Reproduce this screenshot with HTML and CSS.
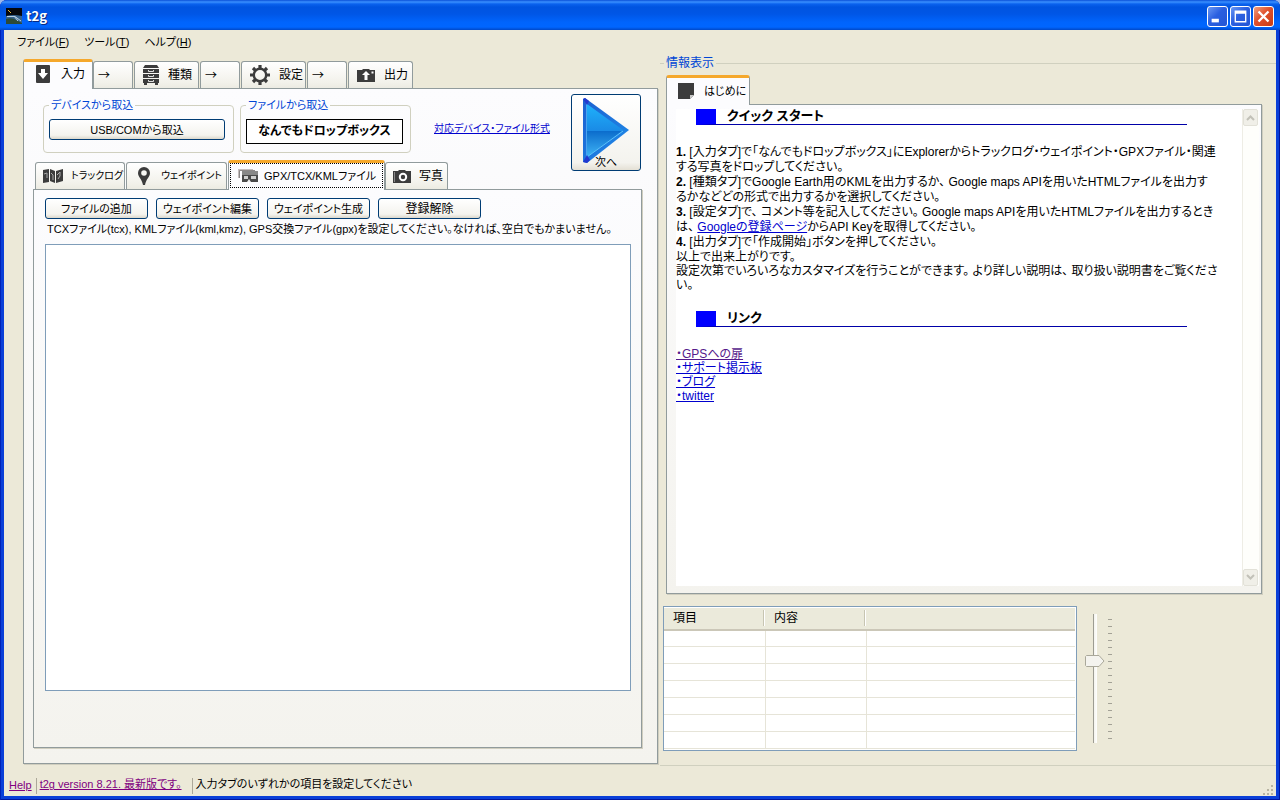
FILE: index.html
```html
<!DOCTYPE html>
<html lang="ja">
<head>
<meta charset="utf-8">
<title>t2g</title>
<link rel="stylesheet" href="styles.css">
</head>
<body>
<div class="window">
  <header class="titlebar">
    <svg class="app-icon" viewBox="0 0 16 16" width="16" height="16" aria-hidden="true">
      <rect width="16" height="16" fill="#05070d"/>
      <path d="M0 8 Q7 6 16 8 V16 H0Z" fill="#35628c"/>
      <path d="M0 11 Q6 9 10 12 L16 15 V16 H0Z" fill="#2c4a38"/>
      <path d="M1 8.500H9L15 13M8 8L12 13" stroke="#b9cfe2" fill="none"/>
      <path d="M2 2h1v1H2zM4 4h1v1H4zM3 3h1v1H3z" fill="#e8b838"/>
    </svg>
    <h1 class="title">t2g</h1>
    <div class="caption-buttons">
      <button class="cap" aria-label="最小化"><svg viewBox="0 0 21 21" width="19" height="19"><path d="M4 13h8v4H4z" fill="#fff"/></svg></button>
      <button class="cap" aria-label="最大化"><svg viewBox="0 0 21 21" width="19" height="19"><path d="M4 4h13v13H4z M5.500 7.500h10v8h-10z" fill="#fff" fill-rule="evenodd"/></svg></button>
      <button class="cap cap-close" aria-label="閉じる"><svg viewBox="0 0 21 21" width="19" height="19"><path d="M5 5L16 16M16 5L5 16" stroke="#fff" stroke-width="2.600"/></svg></button>
    </div>
  </header>

  <div class="client">
    <nav class="menu">
      <button>ファイル(<u>F</u>)</button>
      <button>ツール(<u>T</u>)</button>
      <button>ヘルプ(<u>H</u>)</button>
    </nav>

    <main class="main">
      <section class="left">
        <div class="tabs" role="tablist">
          <button class="tab tab-sel tab-main-sel" role="tab" aria-selected="true">
            <svg viewBox="0 0 14 18" width="14" height="18"><rect width="14" height="18" rx="1" fill="#3c3c3c"/><path d="M5 4h4v4h3l-5 6-5-6h3z" fill="#fff"/></svg>入力</button>
          <button class="tab tab-arrow" role="tab">→</button>
          <button class="tab tab-step" role="tab">
            <svg viewBox="0 0 16 20" width="16" height="20"><path d="M2 0h12l2 3H0zM0 4h16v4H0zM0 9h16v4H0zM0 14h16v4H0zM1 18h3v2H1zM12 18h3v2h-3z" fill="#3c3c3c"/><path d="M5.500 5v1.500h5V5M5.500 10v1.500h5V10M5.500 15v1.500h5V15" stroke="#ddd" fill="none"/></svg>種類</button>
          <button class="tab tab-arrow" role="tab">→</button>
          <button class="tab tab-step" role="tab">
            <svg viewBox="0 0 20 20" width="20" height="20"><circle cx="10" cy="10" r="6.200" fill="none" stroke="#3c3c3c" stroke-width="2.400"/><path d="M10 0v4M10 16v4M0 10h4M16 10h4M3 3l2.800 2.800M14.200 14.200L17 17M17 3l-2.800 2.800M5.800 14.200L3 17" stroke="#3c3c3c" stroke-width="3.200"/></svg>設定</button>
          <button class="tab tab-arrow" role="tab">→</button>
          <button class="tab tab-step" role="tab">
            <svg viewBox="0 0 18 13" width="18" height="13"><path d="M0 1h5l1-1h6l1 1h5v12H0z" fill="#3c3c3c"/><path d="M9 2l4 4h-2.500v5h-3V6H5z" fill="#fff"/><path d="M14.500 2.500h2v2h-2z" fill="#fff"/></svg>出力</button>
        </div>

        <div class="panel outer">
          <div class="source-row">
            <fieldset class="group group-device">
              <legend>デバイスから取込</legend>
              <button class="btn btn-wide">USB/COMから取込</button>
            </fieldset>
            <fieldset class="group group-file">
              <legend>ファイルから取込</legend>
              <div class="dropbox">なんでもドロップボックス</div>
            </fieldset>
            <a class="formats" href="#formats">対応デバイス・ファイル形式</a>
            <button class="btn btn-next">
              <svg viewBox="0 0 46 66" width="46" height="66" aria-hidden="true">
                <defs>
                  <linearGradient id="edge" x1="0" y1="0" x2="1" y2="1"><stop offset="0" stop-color="#1c5fd0"/><stop offset="1" stop-color="#1f8eea"/></linearGradient>
                  <linearGradient id="face" x1="0" y1="0" x2="0" y2="1"><stop offset="0" stop-color="#1fb2fb"/><stop offset=".5" stop-color="#1a8be6"/><stop offset=".51" stop-color="#0b6ccc"/><stop offset="1" stop-color="#3fb4f5"/></linearGradient>
                </defs>
                <path d="M0 1L2 0 46 32 4 65 0 64z" fill="url(#edge)"/>
                <path d="M4 6L40 32 4 59z" fill="url(#face)"/>
                <path d="M4 59L40 33" stroke="#5cc4f8" fill="none"/>
                <path d="M3.500 5V60" stroke="#4aa4ee" fill="none"/>
                <path d="M0 1L2 0 6 3 4 7zM0 64l4-7 3 5-3 3z" fill="#2338cf"/>
              </svg>
              <span>次へ</span>
            </button>
          </div>

          <div class="tabs subtabs" role="tablist">
            <button class="tab tab-track" role="tab">
              <svg viewBox="0 0 20 16" width="20" height="16"><path d="M0 2l6-1v13l-6 1zM7 1l5 2v12l-5-2zM13 3l7-2v12l-7 2z" fill="#3c3c3c"/><path d="M1 6l3-1v5M8 5l2 2v5M14 7l3-3v4l-2 3" stroke="#a8a8a8" fill="none"/></svg>トラックログ</button>
            <button class="tab tab-way" role="tab">
              <svg viewBox="0 0 12 18" width="12" height="18"><path d="M6 0a6 6 0 0 1 6 6c0 4-4 6-5 12H5C4 12 0 10 0 6a6 6 0 0 1 6-6z" fill="#3c3c3c"/><circle cx="6" cy="6" r="2.800" fill="#f8f8f4"/></svg>ウェイポイント</button>
            <button class="tab tab-sel tab-gpx" role="tab" aria-selected="true"><span class="focus">
              <svg viewBox="0 0 20 14" width="20" height="14"><path d="M0 0h15v2H2v7H0z" fill="#c4bcbc"/><path d="M1.500 9V1.500H17" stroke="#8c8888" fill="none"/><path d="M4 3h16v10H4z" fill="#4a4a4a"/><path d="M4 2h16v4H4z" fill="#888"/><path d="M6 7h4v3H6zM13 7h5v3h-5z" fill="#d0d0d0"/><path d="M9 13l2-3 2 3z" fill="#eee"/></svg>GPX/TCX/KMLファイル</span></button>
            <button class="tab tab-photo" role="tab">
              <svg viewBox="0 0 18 13" width="18" height="13"><path d="M0 1h5l1-1h6l1 1h5v12H0z" fill="#3c3c3c"/><circle cx="10" cy="7" r="3.200" fill="none" stroke="#fff" stroke-width="2"/><path d="M1.500 2v10" stroke="#888"/></svg>写真</button>
          </div>

          <div class="panel inner">
            <div class="btn-row">
              <button class="btn">ファイルの追加</button>
              <button class="btn">ウェイポイント編集</button>
              <button class="btn">ウェイポイント生成</button>
              <button class="btn kanji">登録解除</button>
            </div>
            <label class="hint" for="files">TCXファイル(tcx), KMLファイル(kml,kmz), GPS交換ファイル(gpx)を設定してください。なければ、空白でもかまいません。</label>
            <textarea class="files" id="files"></textarea>
          </div>
        </div>
      </section>

      <fieldset class="right">
        <legend class="kanji">情報表示</legend>
        <div class="tabs" role="tablist">
          <button class="tab tab-sel tab-intro" role="tab" aria-selected="true">
            <svg viewBox="0 0 16 16" width="16" height="16"><path d="M0 0h16v12l-4 4H0z" fill="#3c3c3c"/><path d="M12 16v-4h4z" fill="#c8c8c8"/></svg>はじめに</button>
        </div>
        <div class="panel info">
          <article class="doc">
            <h2>クイック スタート</h2>
            <ol class="steps">
              <li><b>1.</b> [入力タブ]で「なんでもドロップボックス」にExplorerからトラックログ・ウェイポイント・GPXファイル・関連<br>する写真をドロップしてください。</li>
              <li><b>2.</b> [種類タブ]でGoogle Earth用のKMLを出力するか、 Google maps APIを用いたHTMLファイルを出力す<br>るかなどどの形式で出力するかを選択してください。</li>
              <li><b>3.</b> [設定タブ]で、 コメント等を記入してください。 Google maps APIを用いたHTMLファイルを出力するとき<br>は、 <a href="#key">Googleの登録ページ</a>からAPI Keyを取得してください。</li>
              <li><b>4.</b> [出力タブ]で「作成開始」ボタンを押してください。</li>
            </ol>
            <p>以上で出来上がりです。<br>設定次第でいろいろなカスタマイズを行うことができます。 より詳しい説明は、 取り扱い説明書をご覧くださ<br>い。</p>
            <h2>リンク</h2>
            <ul class="links">
              <li><a class="visited" href="#gps">・GPSへの扉</a></li>
              <li><a href="#bbs">・サポート掲示板</a></li>
              <li><a href="#blog">・ブログ</a></li>
              <li><a href="#twitter">・twitter</a></li>
            </ul>
          </article>
          <div class="scroll">
            <button aria-label="上へ"><svg viewBox="0 0 9 6" width="9" height="6"><path d="M1 5l3.500-3.500L8 5" stroke="#c2c1b8" stroke-width="2" fill="none"/></svg></button>
            <button aria-label="下へ"><svg viewBox="0 0 9 6" width="9" height="6"><path d="M1 1l3.500 3.500L8 1" stroke="#c2c1b8" stroke-width="2" fill="none"/></svg></button>
          </div>
        </div>

        <div class="detail">
          <div class="grid-box">
            <table class="grid">
              <thead><tr><th class="c1">項目</th><th class="c1">内容</th><th></th></tr></thead>
              <tbody>
                <tr><td></td><td></td><td></td></tr>
                <tr><td></td><td></td><td></td></tr>
                <tr><td></td><td></td><td></td></tr>
                <tr><td></td><td></td><td></td></tr>
                <tr><td></td><td></td><td></td></tr>
                <tr><td></td><td></td><td></td></tr>
                <tr><td></td><td></td><td></td></tr>
              </tbody>
            </table>
          </div>
          <input class="slider" type="range" min="0" max="17" value="6" aria-label="サイズ">
          <div class="ticks"></div>
        </div>
      </fieldset>
    </main>

    <footer class="status">
      <a href="#help">Help</a>
      <a class="sep version" href="#version">t2g version 8.21. 最新版です。</a>
      <span class="sep">入力タブのいずれかの項目を設定してください</span>
      <svg class="grip" viewBox="0 0 12 12" width="12" height="12" aria-hidden="true"><path d="M9 1h2v2H9zM5 5h2v2H5zM9 5h2v2H9zM1 9h2v2H1zM5 9h2v2H5zM9 9h2v2H9z" fill="#b8b4a2"/></svg>
    </footer>
  </div>
</div>
</body>
</html>
```
FILE: styles.css
```css
* { box-sizing: border-box; }

body {
  margin: 0;
  background: #9db8ea;
  color: #000;
  font: 11px/16px "Liberation Sans", "Noto Sans CJK JP", sans-serif;
  font-feature-settings: "palt";
}

button, textarea, input { font: inherit; font-feature-settings: inherit; color: inherit; }
button { padding: 0; border: 0; background: none; white-space: nowrap; }
svg { display: block; flex: none; }
a { color: #0000ce; }

.window {
  display: flex;
  flex-direction: column;
  min-height: 100vh;
  padding: 0 4px 4px;
  background: #0a3fd8;
  border-radius: 7px 7px 0 0;
  box-shadow: inset 1px 0 #0022b8, inset -1px -1px #0016a0;
}

.titlebar {
  display: flex;
  align-items: center;
  height: 30px;
  margin: 0 -4px;
  padding: 2px 6px 0;
  border-radius: 7px 7px 0 0;
  background: linear-gradient(#0a50d8 0, #3a90ff 2px, #0a62ee 4px, #0054e0 7px, #0056e6 14px, #0064fc 22px, #0066ff 27px, #0048c8 30px);
}
.title { margin: 0 0 0 4px; flex: 1; color: #fff; font: bold 13px/16px "Noto Sans CJK JP", sans-serif; text-shadow: 1px 1px #0a2a80; }
.caption-buttons { display: flex; gap: 2px; }
.cap {
  width: 21px;
  height: 21px;
  border: 1px solid #fff;
  border-radius: 3px;
  background: linear-gradient(135deg, #6a98f4, #2a5fe0 45%, #2456d4);
}
.cap-close { background: linear-gradient(135deg, #f0a080, #e0502c 45%, #c83c14); }

.client { flex: 1; display: flex; flex-direction: column; background: #ece9d8; }

.menu { display: flex; gap: 15px; height: 24px; padding: 0 13px; }

.main { flex: 1; display: flex; gap: 2px; padding-left: 19px; }
.left { flex: 635 1 0; min-width: 0; display: flex; flex-direction: column; padding: 5px 0 2px; }

.tabs { display: flex; align-items: flex-end; height: 29px; }
.tab {
  display: flex;
  align-items: center;
  height: 27px;
  margin-right: 1px;
  border: 1px solid #919b9c;
  border-bottom: 0;
  border-radius: 3px 3px 0 0;
  background: linear-gradient(#fff, #f2f1ea 80%, #ecebe2);
}
.tab-sel {
  position: relative;
  z-index: 1;
  height: 30px;
  margin: 0 0 -1px;
  border-top: 3px solid #f5a82c;
  background: #fcfcfe;
}
.tab-main-sel, .tab-arrow, .tab-step, .tab-photo, .kanji { font-size: 12px; }
.tab-main-sel { width: 70px; gap: 11px; padding: 0 0 3px 12px; }
.tab-arrow { width: 40px; padding-left: 4px; font-family: "Noto Sans CJK JP", sans-serif; }
.tab-step { width: 65px; gap: 9px; padding-left: 8px; }
.tab-intro { width: 84px; gap: 10px; padding: 0 0 2px 11px; }

.panel {
  border: 1px solid #919b9c;
  background: linear-gradient(#fcfcfe, #f4f3ee);
  box-shadow: 1px 1px #d0cebf;
}
.outer { flex: 1; display: flex; flex-direction: column; padding: 5px 15px 15px 9px; }

.source-row { display: flex; height: 66px; margin-left: 10px; }
.group { flex: none; height: 56px; margin: 3px 0 0; padding: 6px 5px 0; border: 1px solid #d0d0bf; border-radius: 4px; }
.group legend, .right legend { padding: 0 2px; color: #0046d5; white-space: nowrap; }
.group-device { width: 191px; }
.group-file { width: 171px; margin-left: 6px; }
.btn {
  height: 21px;
  border: 1px solid #003c74;
  border-radius: 3px;
  background: linear-gradient(#fff, #f4f3ee 80%, #dcd8cc);
}
.btn-wide { display: block; width: 176px; }
.dropbox { height: 25px; width: 157px; border: 1px solid #000; background: #fff; font-size: 12px; font-weight: bold; line-height: 23px; text-align: center; white-space: nowrap; }
.formats { margin: 27px 0 0 23px; font-size: 10px; white-space: nowrap; }
.btn-next { flex: none; display: flex; flex-direction: column; align-items: center; width: 70px; height: 77px; margin: 0 1px 0 auto; padding-top: 3px; background: linear-gradient(#fff, #f4f3ee 90%, #e4e0d4); }
.btn-next span { margin-top: -10px; z-index: 1; }

.subtabs { margin-left: 2px; }
.tab-track, .tab-way { font-size: 10px; }
.tab-track { width: 90px; gap: 8px; padding-left: 7px; }
.tab-way { width: 101px; gap: 11px; padding-left: 11px; }
.tab-gpx { width: 157px; padding: 0 1px 2px; }
.focus { display: flex; align-items: center; gap: 6px; width: 100%; height: 100%; padding-left: 7px; border: 1px dotted #000; }
.tab-photo { width: 63px; gap: 8px; padding-left: 7px; }

.inner { flex: 1; display: flex; flex-direction: column; padding: 8px 10px 56px 11px; }
.btn-row { display: flex; gap: 8px; }
.btn-row .btn { width: 103px; }
.hint { margin: 2px 0 7px 2px; white-space: nowrap; }
.files { flex: 1; display: block; resize: none; border: 1px solid #7f9db9; background: #fff; outline: 0; }

.right {
  flex: 599 1 0;
  min-width: 0;
  display: flex;
  flex-direction: column;
  margin: 1px 0 0;
  padding: 4px 14px 14px 3px;
  border: 1px solid #d0d0bf;
  border-width: 1px 0;
}
.right legend { margin-left: 1px; }
.right .tabs { margin-left: 3px; }

.info { flex: 1; display: flex; margin-left: 3px; padding: 4px 2px 7px 9px; }
.doc { flex: 1; min-width: 0; overflow: hidden; background: #fff; font-size: 12px; line-height: 14px; }
.doc h2 {
  width: 491px;
  max-width: 90%;
  height: 16px;
  margin: 0 0 20px 20px;
  padding-left: 11px;
  border-left: 20px solid #00f;
  border-bottom: 1px solid #0000a8;
  font-size: 13px;
  line-height: 14px;
}
.steps, .links { margin: 0; padding: 0; list-style: none; white-space: nowrap; }
.steps { line-height: 15px; }
.doc p { margin: 0 0 19px; white-space: nowrap; }
.doc .visited { color: #551a8b; }

.scroll { display: flex; flex-direction: column; justify-content: space-between; width: 17px; border-left: 1px solid #eeede5; background: #fefefb; }
.scroll button { display: grid; place-items: center; width: 15px; height: 17px; border: 1px solid #e2e1d8; border-radius: 2px; background: #f0efe8; }

.detail { display: flex; margin-top: 12px; }
.grid-box { flex: 0 1 414px; border: 1px solid #7f9db9; padding: 1px 1px 1px 0; background: #fff; }
.grid { width: 100%; border-collapse: collapse; table-layout: fixed; }
.grid th {
  height: 22px;
  padding: 0 0 0 9px;
  border-bottom: 2px solid #cbc7b8;
  background: #ebeadb;
  font-size: 12px;
  font-weight: normal;
  text-align: left;
}
.grid .c1 {
  width: 101px;
  background: linear-gradient(#c7c5b2, #c7c5b2) right 1px center / 1px 16px no-repeat, linear-gradient(#fff, #fff) right 0 center / 1px 16px no-repeat, #ebeadb;
}
.grid td { height: 17px; padding: 0; border: 1px solid #e6e4d8; border-width: 0 1px 1px 0; }
.grid td:last-child { border-right: 0; }

.slider {
  appearance: none;
  writing-mode: vertical-lr;
  width: 20px;
  height: 129px;
  margin: 8px 0 0 8px;
  background: linear-gradient(90deg, #9d9c92 1px, #f4f3ec 1px, #fff 4px) 8px 0 / 4px 100% no-repeat;
}
.slider::-webkit-slider-thumb {
  appearance: none;
  width: 20px;
  height: 12px;
  background: url("data:image/svg+xml,%3Csvg xmlns='http://www.w3.org/2000/svg' width='20' height='12'%3E%3Cpath d='M1.500 .5H14L19 6l-5 5.500H1.500l-1-1v-9z' fill='%23f4f3ee' stroke='%23aaa89a'/%3E%3C/svg%3E") no-repeat;
}
.ticks { width: 4px; height: 120px; margin: 13px 0 0 3px; background: repeating-linear-gradient(#a3a196 0 1px, transparent 1px 7px); }

.status { display: flex; align-items: center; height: 30px; padding: 8px 2px 0 5px; white-space: nowrap; }
.status a { color: #800080; }
.status .sep { margin-left: 4px; }
.status .sep::before { content: ""; display: inline-block; width: 1px; height: 16px; margin-right: 3px; background: #aca899; vertical-align: middle; }
.status .version { margin-right: 6px; }
.grip { margin-left: auto; align-self: flex-end; }
```
